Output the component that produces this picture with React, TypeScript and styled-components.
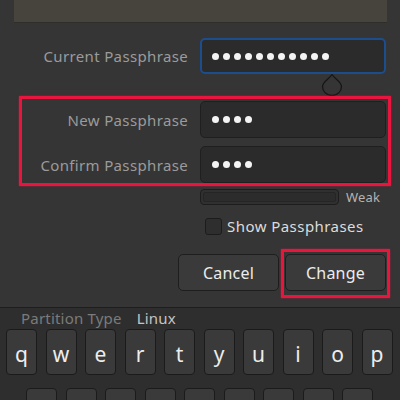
import React from "react";
import styled, { createGlobalStyle } from "styled-components";

const Global = createGlobalStyle`
  html, body { margin: 0; padding: 0; background: #353535; }
  body { font-family: "Noto Sans", "Open Sans", sans-serif; }
`;

const Screen = styled.div`
  width: 400px;
  height: 400px;
  overflow: hidden;
  background: #353535;
  display: flex;
  flex-direction: column;
`;

const TopPanel = styled.div`
  margin: 0 13px 0 14px;
  height: 22px;
  background: #47443e;
  box-shadow: 0 1px 0 #2f2e2b;
  flex: none;
`;

const Row = styled.div<{ $top?: number }>`
  display: grid;
  grid-template-columns: 166px 186px;
  column-gap: 12px;
  align-items: center;
  margin-top: ${(p) => p.$top ?? 0}px;
`;

const Label = styled.div`
  text-align: right;
  color: #9b9b9b;
  font-size: 15px;
  letter-spacing: 0.35px;
  white-space: nowrap;
`;

const Entry = styled.div<{ $focused?: boolean }>`
  height: ${(p) => (p.$focused ? 36 : 37)}px;
  box-sizing: border-box;
  border-radius: 5px;
  background: #2b2b2b;
  border: ${(p) => (p.$focused ? "2px solid #1c4e8e" : "1px solid #1f1f1f")};
  display: flex;
  align-items: center;
  gap: 4px;
  padding-left: ${(p) => (p.$focused ? 10 : 11)}px;
`;

const Dot = styled.span`
  width: 7px;
  height: 7px;
  border-radius: 50%;
  background: #f4f4f4;
  flex: none;
`;

const Form = styled.div`
  padding-left: 22px;
`;

const HandleRow = styled.div`
  height: 23px;
  padding-left: 321px;
  display: flex;
  align-items: flex-start;
`;

const Highlight = styled.div`
  margin-left: 19px;
  width: 372px;
  height: 93px;
  box-sizing: border-box;
  border: 3px solid #e8163f;
  box-shadow: 0 0 2px rgba(232, 22, 63, 0.6);
  padding: 2px 0 0 0;
  display: flex;
  flex-direction: column;
  gap: 8px;
`;

const StrengthRow = styled.div`
  margin: 2px 0 0 200px;
  display: flex;
  align-items: center;
  gap: 7px;
`;

const Trough = styled.div`
  width: 139px;
  height: 16px;
  box-sizing: border-box;
  border: 1px solid #1d1d1d;
  border-radius: 4px;
  background: #303030;
  padding: 2px;
`;

const TroughInner = styled.div`
  height: 100%;
  box-sizing: border-box;
  border-radius: 2px;
  border: 1px solid #252525;
  background: #2c2c2c;
`;

const Small = styled.span`
  color: #b4b4b4;
  font-size: 13px;
  letter-spacing: 0.2px;
`;

const CheckRow = styled.div`
  margin: 10px 0 0 205px;
  display: flex;
  align-items: center;
  gap: 5px;
`;

const Box = styled.div`
  width: 17px;
  height: 17px;
  box-sizing: border-box;
  border: 1px solid #1c1c1c;
  border-radius: 3px;
  background: #2e2e2e;
`;

const CheckText = styled.span`
  color: #dcdcdc;
  font-size: 15px;
  letter-spacing: 0.45px;
`;

const ButtonRow = styled.div`
  margin: 13px 0 0 178px;
  display: flex;
  align-items: flex-start;
`;

const Button = styled.div<{ $top?: number }>`
  width: 101px;
  height: 37px;
  margin-top: ${(p) => p.$top ?? 0}px;
  box-sizing: border-box;
  border: 1px solid #1e1e1e;
  border-radius: 5px;
  background: #3a3a3a;
  color: #ececec;
  font-size: 16px;
  letter-spacing: 0.2px;
  display: flex;
  align-items: center;
  justify-content: center;
`;

const ButtonHighlight = styled.div`
  margin-left: 2px;
  width: 109px;
  height: 49px;
  box-sizing: border-box;
  border: 3px solid #e8163f;
  box-shadow: 0 0 2px rgba(232, 22, 63, 0.6);
  padding: 2px 0 0 1px;
`;

const Keyboard = styled.div`
  margin-top: 9px;
  border-top: 1px solid #1e1e1e;
  background: #2e2e2e;
  flex: 1;
  display: flex;
  flex-direction: column;
`;

const InfoLine = styled.div`
  padding: 0 0 1px 21px;
  height: 20px;
  display: flex;
  align-items: center;
  gap: 15px;
  font-size: 15px;
  letter-spacing: 0.2px;
  overflow: hidden;
`;

const InfoKey = styled.span`
  color: #7b7b7b;
`;

const InfoValue = styled.span`
  color: #c4c4c4;
`;

const KeyRow = styled.div<{ $left: number; $top: number }>`
  display: flex;
  gap: 8.5px;
  margin: ${(p) => p.$top}px 0 0 ${(p) => p.$left}px;
`;

const Key = styled.div`
  width: 31px;
  height: 46px;
  flex: none;
  box-sizing: border-box;
  border: 1px solid #1b1b1b;
  border-radius: 4px;
  background: #3a3a3a;
  color: #ededed;
  font-size: 21px;
  display: flex;
  align-items: center;
  justify-content: center;
  padding-top: 3px;
`;

const dots = (n: number) =>
  Array.from({ length: n }, (_, i) => <Dot key={i} />);

export default function App() {
  return (
    <Screen>
      <Global />
      <TopPanel />
      <Form>
        <Row $top={16}>
          <Label>Current Passphrase</Label>
          <Entry $focused>{dots(11)}</Entry>
        </Row>
      </Form>
      <HandleRow>
        <svg width="22" height="22" viewBox="0 0 22 22">
          <path
            d="M11 0.5 C14 5 20.5 8 20.5 12.5 A9.5 9 0 0 1 1.5 12.5 C1.5 8 8 5 11 0.5 Z"
            fill="#353535"
            stroke="#161616"
            strokeWidth="1.3"
          />
        </svg>
      </HandleRow>
      <Highlight>
        <Row>
          <Label>New Passphrase</Label>
          <Entry>{dots(4)}</Entry>
        </Row>
        <Row>
          <Label>Confirm Passphrase</Label>
          <Entry>{dots(4)}</Entry>
        </Row>
      </Highlight>
      <StrengthRow>
        <Trough>
          <TroughInner />
        </Trough>
        <Small>Weak</Small>
      </StrengthRow>
      <CheckRow>
        <Box />
        <CheckText>Show Passphrases</CheckText>
      </CheckRow>
      <ButtonRow>
        <Button $top={5}>Cancel</Button>
        <ButtonHighlight>
          <Button>Change</Button>
        </ButtonHighlight>
      </ButtonRow>
      <Keyboard>
        <InfoLine>
          <InfoKey>Partition Type</InfoKey>
          <InfoValue>Linux</InfoValue>
        </InfoLine>
        <KeyRow $left={6} $top={0}>
          {"qwertyuiop".split("").map((k) => (
            <Key key={k}>{k}</Key>
          ))}
        </KeyRow>
        <KeyRow $left={26} $top={13}>
          {"asdfghjkl".split("").map((k) => (
            <Key key={k}>{k}</Key>
          ))}
        </KeyRow>
      </Keyboard>
    </Screen>
  );
}
